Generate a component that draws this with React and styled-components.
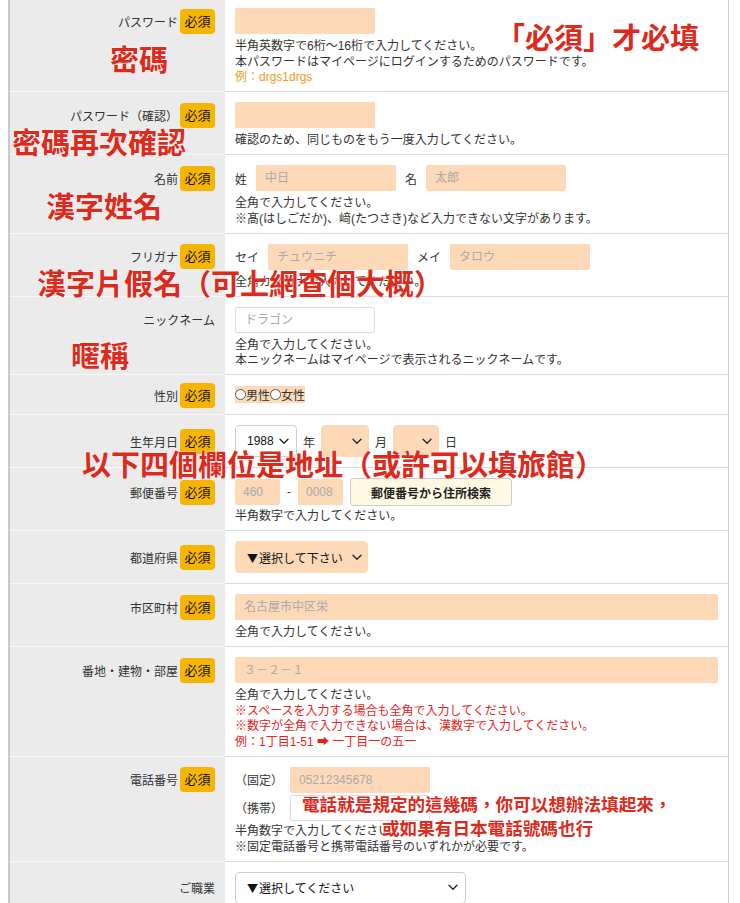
import React from 'react';
import styled, { createGlobalStyle } from 'styled-components';

const GlobalStyle = createGlobalStyle`
  body {
    margin: 0;
    background: #fff;
    color: #333;
    font-family: "Liberation Sans", "Noto Sans CJK JP", sans-serif;
  }
`;

const Page = styled.div`
  position: relative;
  width: 740px;
`;

const Form = styled.div`
  margin-left: 8px;
  width: 721px;
  box-sizing: border-box;
  border-left: 2px solid #c9c9c9;
  border-right: 1px solid #cfcfcf;
`;

const Row = styled.div`
  display: grid;
  grid-template-columns: 215px 1fr;
`;

/* 左側のラベル欄 */
const Head = styled.div`
  background: #ebebeb;
  border-bottom: 1px solid #f8f8f8;
  padding: ${p => p.$pt}px 10px 0 0;
`;

const HeadLine = styled.div`
  height: ${p => p.$h}px;
  display: flex;
  align-items: center;
  justify-content: flex-end;
  gap: 2px;
  font-size: 12px;
  white-space: nowrap;
`;

const Badge = styled.span`
  flex-shrink: 0;
  height: 25px;
  line-height: 25px;
  padding: 0 4.5px;
  border-radius: 4px;
  background: #f6b500;
  color: #111;
  font-size: 13px;
`;

/* 右側の入力欄 */
const Cell = styled.div`
  background: #fff;
  border-bottom: 1px solid #dcdcdc;
  padding: ${p => p.$pt}px 10px ${p => p.$pb}px 10px;
`;

const Line = styled.div`
  display: flex;
  align-items: center;
  gap: ${p => p.$gap}px;
  height: ${p => p.$h}px;
  font-size: 12px;
  & + & {
    margin-top: 2px;
  }
`;

const Help = styled.div`
  margin-top: ${p => p.$mt}px;
  font-size: 12px;
  line-height: 15.5px;
`;

const HelpLine = styled.div`
  color: ${p => (p.$tone === 'orange' ? '#f29b1d' : p.$tone === 'red' ? '#e5231b' : '#333')};
  white-space: nowrap;
`;

const Input = styled.input`
  box-sizing: border-box;
  width: ${p => p.$w}px;
  height: 26px;
  margin: 0;
  padding: 0 ${p => p.$px ?? 9}px;
  border: ${p => (p.$plain ? '1px solid #dddddd' : 'none')};
  border-radius: 2px;
  background: ${p => (p.$plain ? '#fff' : '#fdd9b8')};
  font-family: inherit;
  font-size: 12px;
  color: #333;
  outline: none;
  &::placeholder {
    color: #aaa;
  }
`;

const Select = styled.div`
  box-sizing: border-box;
  width: ${p => p.$w}px;
  height: 32px;
  display: flex;
  align-items: center;
  justify-content: space-between;
  padding: 0 ${p => p.$pr}px 0 11px;
  border: ${p => (p.$plain ? '1px solid #cfcfcf' : '1px solid #fdd9b8')};
  border-radius: 4px;
  background: ${p => (p.$plain ? '#fff' : '#fdd9b8')};
  font-size: 12px;
  color: #111;
`;

const Tri = styled.span`
  font-family: "Noto Sans CJK JP", sans-serif;
  font-size: 11px;
  margin-right: 1px;
`;

const Unit = styled.span`
  font-size: 12px;
  color: #333;
`;

const SearchButton = styled.button`
  box-sizing: border-box;
  width: 162px;
  height: 28px;
  border: 1px solid #cdcdcd;
  border-radius: 3px;
  background: #fff9e3;
  font-family: inherit;
  font-size: 12px;
  font-weight: 700;
  color: #222;
  padding: 0;
`;

const RadioGroup = styled.div`
  display: inline-flex;
  align-items: center;
  height: 17px;
  margin-top: -2px;
  background: #fdd9b8;
  font-size: 12px;
`;

const RadioMark = styled.span`
  box-sizing: border-box;
  width: 11px;
  height: 11px;
  border: 1px solid #555;
  border-radius: 50%;
  background: #fff;
`;

/* 赤字の書き込み */
const Note = styled.div`
  position: absolute;
  left: ${p => p.$x}px;
  top: ${p => p.$y}px;
  font-family: "Noto Sans CJK TC", sans-serif;
  font-weight: 700;
  font-size: ${p => p.$size}px;
  line-height: 1;
  color: #dc2a1c;
  white-space: nowrap;
  text-shadow: 0 0 2px #fff, 0 0 1px #fff;
`;

const Chevron = () => (
  <svg width="10" height="7" viewBox="0 0 10 7" fill="none">
    <path d="M1 1.2l4 4 4-4" stroke="#222" strokeWidth="1.3" strokeLinecap="round" strokeLinejoin="round" />
  </svg>
);

const Field = ({ label, required, h = 26, pt = 10, pb = 5.5, children }) => (
  <Row>
    <Head $pt={pt}>
      <HeadLine $h={h}>
        <span>{label}</span>
        {required && <Badge>必須</Badge>}
      </HeadLine>
    </Head>
    <Cell $pt={pt} $pb={pb}>{children}</Cell>
  </Row>
);

const Notes = ({ lines, mt = 5 }) => (
  <Help $mt={mt}>
    {lines.map((l, i) => (
      <HelpLine key={i} $tone={l.tone}>{l.text}</HelpLine>
    ))}
  </Help>
);

const App = () => {
  return (
    <>
      <GlobalStyle />
      <Page>
        <Form>
          <Field label="パスワード" required pt={8}>
            <Line $h={26} $gap={9}><Input $w={140} type="password" /></Line>
            <Notes lines={[
              { text: '半角英数字で6桁〜16桁で入力してください。' },
              { text: '本パスワードはマイページにログインするためのパスワードです。' },
              { text: '例：drgs1drgs', tone: 'orange' },
            ]} />
          </Field>

          <Field label="パスワード（確認）" required>
            <Line $h={26} $gap={9}><Input $w={140} type="password" /></Line>
            <Notes lines={[{ text: '確認のため、同じものをもう一度入力してください。' }]} />
          </Field>

          <Field label="名前" required>
            <Line $h={26} $gap={9}>
              <Unit>姓</Unit>
              <Input $w={140} placeholder="中日" />
              <Unit>名</Unit>
              <Input $w={140} placeholder="太郎" />
            </Line>
            <Notes lines={[
              { text: '全角で入力してください。' },
              { text: '※髙(はしごだか)、﨑(たつさき)など入力できない文字があります。' },
            ]} />
          </Field>

          <Field label="フリガナ" required>
            <Line $h={26} $gap={9}>
              <Unit>セイ</Unit>
              <Input $w={140} placeholder="チュウニチ" />
              <Unit>メイ</Unit>
              <Input $w={140} placeholder="タロウ" />
            </Line>
            <Notes lines={[{ text: '全角カタカナで入力してください。' }]} />
          </Field>

          <Field label="ニックネーム">
            <Line $h={26} $gap={9}><Input $w={140} $plain placeholder="ドラゴン" /></Line>
            <Notes lines={[
              { text: '全角で入力してください。' },
              { text: '本ニックネームはマイページで表示されるニックネームです。' },
            ]} />
          </Field>

          <Field label="性別" required h={20} pb={9}>
            <Line $h={20} $gap={0}>
              <RadioGroup>
                <RadioMark />男性<RadioMark />女性
              </RadioGroup>
            </Line>
          </Field>

          <Field label="生年月日" required h={32} pb={10}>
            <Line $h={32} $gap={6}>
              <Select $w={62} $pr={7} $plain>1988<Chevron /></Select>
              <Unit>年</Unit>
              <Select $w={48} $pr={6}><span /><Chevron /></Select>
              <Unit>月</Unit>
              <Select $w={46} $pr={6}><span /><Chevron /></Select>
              <Unit>日</Unit>
            </Line>
          </Field>

          <Field label="郵便番号" required h={28}>
            <Line $h={28} $gap={7}>
              <Input $w={45} $px={8} placeholder="460" />
              <Unit>-</Unit>
              <Input $w={45} $px={8} placeholder="0008" />
              <SearchButton type="button">郵便番号から住所検索</SearchButton>
            </Line>
            <Notes mt={3} lines={[{ text: '半角数字で入力してください。' }]} />
          </Field>

          <Field label="都道府県" required h={32} pb={10}>
            <Line $h={32} $gap={6}>
              <Select $w={133} $pr={5}><span><Tri>▼</Tri>選択して下さい</span><Chevron /></Select>
            </Line>
          </Field>

          <Field label="市区町村" required>
            <Line $h={26} $gap={9}><Input $w={483} placeholder="名古屋市中区栄" /></Line>
            <Notes lines={[{ text: '全角で入力してください。' }]} />
          </Field>

          <Field label="番地・建物・部屋" required>
            <Line $h={26} $gap={9}><Input $w={483} placeholder="３－２－１" /></Line>
            <Notes lines={[
              { text: '全角で入力してください。' },
              { text: '※スペースを入力する場合も全角で入力してください。', tone: 'red' },
              { text: '※数字が全角で入力できない場合は、漢数字で入力してください。', tone: 'red' },
              { text: '例：1丁目1-51 ➡ 一丁目一の五一', tone: 'red' },
            ]} />
          </Field>

          <Field label="電話番号" required>
            <Line $h={26} $gap={7}>
              <Unit>（固定）</Unit>
              <Input $w={140} placeholder="05212345678" />
            </Line>
            <Line $h={26} $gap={7}>
              <Unit>（携帯）</Unit>
              <Input $w={140} $plain />
            </Line>
            <Notes mt={3.5} lines={[
              { text: '半角数字で入力してください。' },
              { text: '※固定電話番号と携帯電話番号のいずれかが必要です。' },
            ]} />
          </Field>

          <Field label="ご職業" h={32} pb={20}>
            <Line $h={32} $gap={6}>
              <Select $w={231} $pr={7} $plain><span><Tri>▼</Tri>選択してください</span><Chevron /></Select>
            </Line>
          </Field>
        </Form>

        <Note $x={110} $y={44} $size={29}>密碼</Note>
        <Note $x={496} $y={22} $size={29}>「必須」才必填</Note>
        <Note $x={12} $y={127} $size={29}>密碼再次確認</Note>
        <Note $x={46} $y={191} $size={29}>漢字姓名</Note>
        <Note $x={37} $y={268} $size={29}>漢字片假名（可上網查個大概）</Note>
        <Note $x={71} $y={340} $size={29}>暱稱</Note>
        <Note $x={82} $y={449} $size={29}>以下四個欄位是地址（或許可以填旅館）</Note>
        <Note $x={302} $y={795} $size={17.6}>電話就是規定的這幾碼，你可以想辦法填起來，</Note>
        <Note $x={382} $y={819} $size={17.6}>或如果有日本電話號碼也行</Note>
      </Page>
    </>
  );
};

export default App;
